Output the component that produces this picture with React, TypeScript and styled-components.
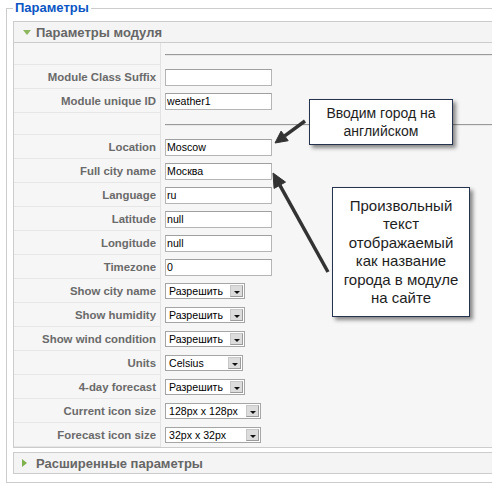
import React from 'react';
import styled, { createGlobalStyle } from 'styled-components';

const GlobalStyle = createGlobalStyle`
    html, body {
        margin: 0;
        padding: 0;
        background: #ffffff;
        overflow: hidden;
    }
    body {
        font-family: "Liberation Sans", Arial, sans-serif;
    }
`

const Page = styled.div`
    position: relative;
    width: 492px;
    height: 486px;
    overflow: hidden;
`

const Fieldset = styled.fieldset`
    margin: 0 0 0 6px;
    padding: 5px 0 8px 6px;
    border: 1px solid #cccccc;
    width: 540px;
    box-sizing: border-box;
`

const Legend = styled.legend`
    padding: 0 2px;
    color: #0b55c4;
    font-size: 13px;
    font-weight: bold;
    line-height: 16px;
`

const Panel = styled.div<{ $gap?: number }>`
    border: 1px solid #cccccc;
    background: #f6f6f6;
    margin-top: ${p => p.$gap ?? 0}px;
`

const PanelHeader = styled.h3<{ $open?: boolean }>`
    margin: 0;
    height: 20px;
    padding-left: 8px;
    display: flex;
    align-items: center;
    gap: 5px;
    background: #f4f4f4;
    border-bottom: ${p => (p.$open ? '1px solid #cccccc' : 'none')};
    color: #666666;
    font-size: 13px;
    font-weight: bold;
`

const Toggle = styled.span<{ $open?: boolean }>`
    display: inline-block;
    width: 0;
    height: 0;
    ${p => p.$open
        ? `border-left: 4.5px solid transparent;
           border-right: 4.5px solid transparent;
           border-top: 5px solid #8db65e;
           margin-left: 1px;`
        : `border-top: 4.5px solid transparent;
           border-bottom: 4.5px solid transparent;
           border-left: 5px solid #7fb24f;
           margin-right: 4px;`}
`

const Row = styled.div<{ $sep?: boolean }>`
    display: grid;
    grid-template-columns: 147px 1fr;
    height: ${p => (p.$sep ? 22 : 24)}px;
`

const Key = styled.div`
    background: #f6f6f6;
    border-right: 1px solid #e2e2e2;
    border-bottom: 1px solid #e6e6e6;
    color: #6a6a6a;
    font-size: 11.4px;
    font-weight: bold;
    text-align: right;
    padding-right: 4px;
    display: flex;
    align-items: center;
    justify-content: flex-end;
`

const Value = styled.div`
    padding-left: 4px;
    display: flex;
    align-items: center;
`

const Rule = styled.div`
    flex: 1;
    border-top: 1px solid #9a9a9a;
    border-bottom: 1px solid #e8e8e8;
    margin-top: 1px;
`

const TextInput = styled.input`
    box-sizing: border-box;
    width: 107px;
    height: 17px;
    margin: 0;
    padding: 0 1px;
    border: 1px solid #b5b5b5;
    border-top-color: #a0a0a0;
    background: #ffffff;
    color: #000000;
    font-family: "Liberation Sans", Arial, sans-serif;
    font-size: 10.6px;
    outline: none;
`

const Select = styled.div<{ $width: number }>`
    box-sizing: border-box;
    width: ${p => p.$width}px;
    height: 16px;
    border: 1px solid #a5a5a5;
    background: #ffffff;
    display: flex;
    align-items: center;
    justify-content: space-between;
    padding: 0 1px 0 3px;
    font-size: 10.6px;
    color: #000000;
`

const SelectButton = styled.span`
    box-sizing: border-box;
    width: 13px;
    height: 12px;
    background: #dcdcdc;
    border: 1px solid #9b9b9b;
    border-top-color: #c8c8c8;
    border-left-color: #c8c8c8;
    display: flex;
    align-items: center;
    justify-content: center;

    &::after {
        content: '';
        width: 0;
        height: 0;
        margin-top: 2px;
        border-left: 3.5px solid transparent;
        border-right: 3.5px solid transparent;
        border-top: 3.5px solid #111111;
    }
`

const Callout = styled.div<{ $x: number; $y: number; $w: number; $h: number; $size: number }>`
    position: absolute;
    left: ${p => p.$x}px;
    top: ${p => p.$y}px;
    width: ${p => p.$w}px;
    height: ${p => p.$h}px;
    box-sizing: border-box;
    background: #ffffff;
    border: 1px solid #26334f;
    box-shadow: 3px 3px 4px rgba(0, 0, 0, 0.45);
    color: #1e1e1e;
    font-size: ${p => p.$size}px;
    line-height: 18.5px;
    text-align: center;
    display: flex;
    align-items: center;
    justify-content: center;
`

const Arrows = styled.svg`
    position: absolute;
    left: 0;
    top: 0;
    pointer-events: none;
`

type Field =
    | { kind: 'sep' }
    | { kind: 'input'; label: string; value: string }
    | { kind: 'select'; label: string; value: string; width: number };

const fields: Field[] = [
    { kind: 'sep' },
    { kind: 'input', label: 'Module Class Suffix', value: '' },
    { kind: 'input', label: 'Module unique ID', value: 'weather1' },
    { kind: 'sep' },
    { kind: 'input', label: 'Location', value: 'Moscow' },
    { kind: 'input', label: 'Full city name', value: 'Москва' },
    { kind: 'input', label: 'Language', value: 'ru' },
    { kind: 'input', label: 'Latitude', value: 'null' },
    { kind: 'input', label: 'Longitude', value: 'null' },
    { kind: 'input', label: 'Timezone', value: '0' },
    { kind: 'select', label: 'Show city name', value: 'Разрешить', width: 80 },
    { kind: 'select', label: 'Show humidity', value: 'Разрешить', width: 80 },
    { kind: 'select', label: 'Show wind condition', value: 'Разрешить', width: 80 },
    { kind: 'select', label: 'Units', value: 'Celsius', width: 78 },
    { kind: 'select', label: '4-day forecast', value: 'Разрешить', width: 80 },
    { kind: 'select', label: 'Current icon size', value: '128px x 128px', width: 96 },
    { kind: 'select', label: 'Forecast icon size', value: '32px x 32px', width: 96 },
];

function ParamRow({ field }: { field: Field }) {
    if (field.kind === 'sep') {
        return (
            <Row $sep>
                <Key />
                <Value><Rule /></Value>
            </Row>
        )
    }
    return (
        <Row>
            <Key>{field.label}</Key>
            <Value>
                {field.kind === 'input'
                    ? <TextInput readOnly value={field.value} />
                    : (
                        <Select $width={field.width}>
                            <span>{field.value}</span>
                            <SelectButton />
                        </Select>
                    )}
            </Value>
        </Row>
    )
}

export default function App() {
    return (
        <Page>
            <GlobalStyle />
            <Fieldset>
                <Legend>Параметры</Legend>
                <Panel>
                    <PanelHeader $open>
                        <Toggle $open />
                        Параметры модуля
                    </PanelHeader>
                    {fields.map((f, i) => <ParamRow key={i} field={f} />)}
                </Panel>
                <Panel $gap={4}>
                    <PanelHeader>
                        <Toggle />
                        Расширенные параметры
                    </PanelHeader>
                </Panel>
            </Fieldset>

            <Arrows width="492" height="486" viewBox="0 0 492 486">
                <g fill="#333333" stroke="#333333">
                    <line x1="305" y1="121" x2="284.7" y2="135.9" strokeWidth="3.5" />
                    <polygon points="275,143 288.2,140.7 281.1,131.1" strokeWidth="1" />
                    <line x1="328" y1="272" x2="279.8" y2="185.2" strokeWidth="3.5" />
                    <polygon points="273,173 285.5,182.1 274.1,188.4" strokeWidth="1" />
                </g>
            </Arrows>

            <Callout $x={309} $y={99} $w={144} $h={46} $size={14}>
                Вводим город на<br />английском
            </Callout>
            <Callout $x={332} $y={187} $w={138} $h={130} $size={15}>
                Произвольный<br />текст<br />отображаемый<br />как название<br />города в модуле<br />на сайте
            </Callout>
        </Page>
    )
}
